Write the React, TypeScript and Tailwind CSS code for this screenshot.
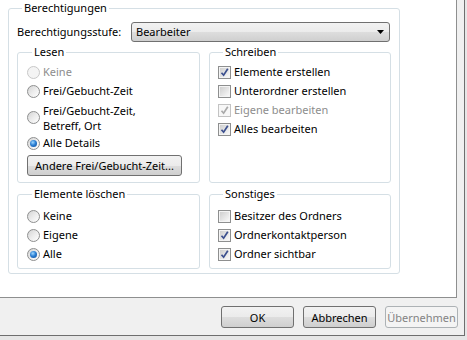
import type { FC, ReactNode } from "react";

// Windows 7 style permission dialog (Outlook folder properties)

const Radio: FC<{ checked?: boolean; disabled?: boolean }> = ({ checked, disabled }) => (
  <span
    className={`w-[13px] h-[13px] shrink-0 rounded-full border flex items-center justify-center ${
      disabled
        ? "border-[#c8c8c8] bg-[#f4f4f4]"
        : "border-[#8e8f8f] bg-gradient-to-br from-[#d4d4d4] via-[#ececec] to-[#ffffff]"
    }`}
  >
    {checked && (
      <span className="w-[7px] h-[7px] rounded-full bg-[radial-gradient(circle_at_40%_35%,#9fd7ff_0%,#2b7fd3_45%,#0d4a98_100%)]" />
    )}
  </span>
);

const Check: FC<{ checked?: boolean; disabled?: boolean }> = ({ checked, disabled }) => (
  <span
    className={`w-[13px] h-[13px] shrink-0 border flex items-center justify-center ${
      disabled ? "border-[#c3c3c3] bg-[#f7f7f7]" : "border-[#8e8f8f] bg-[#f4f4f4]"
    }`}
  >
    <span
      className={`w-[9px] h-[9px] flex items-center justify-center ${
        disabled ? "bg-[#f7f7f7]" : "bg-gradient-to-br from-[#cfcfcf] to-[#f8f8f8]"
      }`}
    >
      {checked && (
        <svg width="9" height="9" viewBox="0 0 9 9">
          <path
            d="M1.5 4.8 L3.6 7.2 L7.8 0.8"
            fill="none"
            stroke={disabled ? "#a9a9a9" : "#3b4f8e"}
            strokeWidth="1.7"
          />
        </svg>
      )}
    </span>
  </span>
);

const Group: FC<{ title: string; className?: string; children: ReactNode }> = ({
  title,
  className = "",
  children,
}) => (
  <fieldset className={`border border-[#d5dfe5] rounded-[3px] min-w-0 ${className}`}>
    <legend className="ml-[5px] px-[2px] leading-[16px] text-black">{title}</legend>
    {children}
  </fieldset>
);

const Row: FC<{ children: ReactNode; disabled?: boolean; className?: string }> = ({
  children,
  disabled,
  className = "h-[19px]",
}) => (
  <div className={`flex items-center gap-[3px] ${className} ${disabled ? "text-[#8d8d8d]" : "text-black"}`}>
    {children}
  </div>
);

const WinButton: FC<{ label: string; disabled?: boolean; className?: string }> = ({
  label,
  disabled,
  className = "w-[73px] h-[22px]",
}) => (
  <button
    className={`${className} rounded-[3px] border flex items-center justify-center leading-none ${
      disabled
        ? "border-[#adb2b5] bg-[#f4f4f4] text-[#838383]"
        : "border-[#707070] bg-[linear-gradient(#f2f2f2_0%,#ebebeb_50%,#dddddd_51%,#cfcfcf_100%)] text-black"
    }`}
  >
    {label}
  </button>
);

const App: FC = () => {
  return (
    <div className="w-[467px] h-[340px] bg-[#e6e6e6] overflow-hidden text-[11px] font-['Noto_Sans',sans-serif]">
      <div className="w-[465px] h-[336px] bg-[#f0f0f0] border-r border-b border-[#6e6e6e] flex flex-col">
        <div className="w-[457px] h-[298px] bg-white border-r border-b border-[#8e8f8f] pl-[8px]">
          <Group title="Berechtigungen" className="w-[392px] h-[274px] pl-[8px] pr-[9px]">
            <div className="flex items-center h-[20px] mt-[6px]">
              <span className="w-[114px]">Berechtigungsstufe:</span>
              <div className="flex-1 h-[20px] rounded-[3px] border border-[#707070] bg-[linear-gradient(#f2f2f2_0%,#ebebeb_50%,#dddddd_51%,#cfcfcf_100%)] flex items-center pl-[4px] pr-[5px]">
                <span className="flex-1">Bearbeiter</span>
                <svg width="7" height="4" viewBox="0 0 7 4">
                  <path d="M0 0 H7 L3.5 4 Z" fill="#000" />
                </svg>
              </div>
            </div>

            <div className="grid grid-cols-[183px_182px] gap-x-[9px] mt-[2px]">
              <Group title="Lesen" className="h-[139px] pl-[9px] pt-[3px]">
                <Row disabled>
                  <Radio disabled />
                  <span>Keine</span>
                </Row>
                <Row>
                  <Radio />
                  <span>Frei/Gebucht-Zeit</span>
                </Row>
                <Row className="h-[33px]">
                  <Radio />
                  <span className="leading-[15px]">
                    Frei/Gebucht-Zeit,
                    <br />
                    Betreff, Ort
                  </span>
                </Row>
                <Row>
                  <Radio checked />
                  <span>Alle Details</span>
                </Row>
                <WinButton label="Andere Frei/Gebucht-Zeit..." className="w-[155px] h-[21px] mt-[2px]" />
              </Group>

              <Group title="Schreiben" className="h-[139px] pl-[8px] pt-[3px]">
                <Row>
                  <Check checked />
                  <span>Elemente erstellen</span>
                </Row>
                <Row>
                  <Check />
                  <span>Unterordner erstellen</span>
                </Row>
                <Row disabled>
                  <Check checked disabled />
                  <span>Eigene bearbeiten</span>
                </Row>
                <Row>
                  <Check checked />
                  <span>Alles bearbeiten</span>
                </Row>
              </Group>

              <Group title="Elemente löschen" className="h-[83px] mt-[3px] pl-[9px] pt-[5px]">
                <Row>
                  <Radio />
                  <span>Keine</span>
                </Row>
                <Row>
                  <Radio />
                  <span>Eigene</span>
                </Row>
                <Row>
                  <Radio checked />
                  <span>Alle</span>
                </Row>
              </Group>

              <Group title="Sonstiges" className="h-[83px] mt-[3px] pl-[8px] pt-[5px]">
                <Row>
                  <Check />
                  <span>Besitzer des Ordners</span>
                </Row>
                <Row>
                  <Check checked />
                  <span>Ordnerkontaktperson</span>
                </Row>
                <Row>
                  <Check checked />
                  <span>Ordner sichtbar</span>
                </Row>
              </Group>
            </div>
          </Group>
        </div>

        <div className="flex justify-end gap-[9px] pr-[6px] mt-[8px]">
          <WinButton label="OK" />
          <WinButton label="Abbrechen" />
          <WinButton label="Übernehmen" disabled />
        </div>
      </div>
    </div>
  );
};

export default App;
